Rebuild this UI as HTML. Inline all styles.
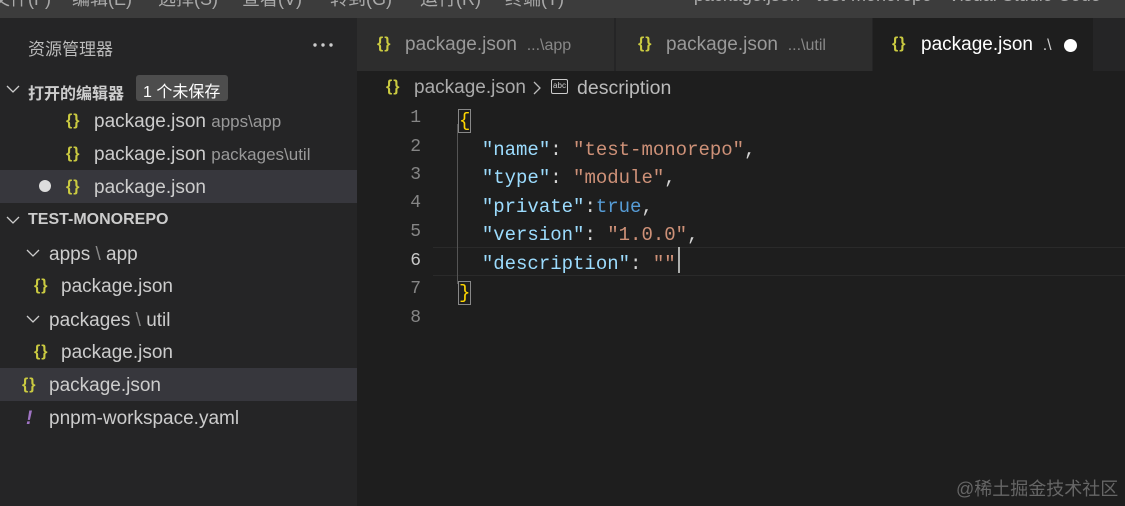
<!DOCTYPE html><html><head><meta charset="utf-8"><style>
*{margin:0;padding:0;box-sizing:border-box}
body{width:1125px;height:506px;overflow:hidden;background:#1e1e1e;font-family:"Liberation Sans","Noto Sans CJK SC",sans-serif;position:relative;color:#ccc}
.tb{position:absolute;left:0;top:0;width:1125px;height:18px;background:#3c3c3c;overflow:hidden}
.tb span{position:absolute;top:-15px;font-size:18px;color:#aaa}
.side{position:absolute;left:0;top:18px;width:357px;height:488px;background:#252526}
.a{position:absolute;white-space:nowrap;font-size:19px}
.br{color:#cbcb41;font-weight:bold;font-size:16px;letter-spacing:1px}
.row{position:absolute;left:0;width:357px;height:33px}
.tabs{position:absolute;left:357px;top:18px;width:768px;height:53px;background:#252526}
.tab{position:absolute;top:0;height:53px;background:#2d2d2d}
.ed{position:absolute;left:357px;top:71px;width:768px;height:435px;background:#1e1e1e}
.code{font-family:"Liberation Mono",monospace;font-size:19px;position:absolute;white-space:pre}
.k{color:#9cdcfe}.s{color:#ce9178}.b{color:#569cd6}
.ln{color:#858585;font-family:"Liberation Mono",monospace;font-size:18px;position:absolute;width:30px;text-align:right}
svg.ch{position:absolute;width:14px;height:14px}
</style></head><body>
<div class="tb">
<span style="left:-8px">文件(F)</span><span style="left:72px">编辑(E)</span><span style="left:158px">选择(S)</span><span style="left:242px">查看(V)</span><span style="left:330px">转到(G)</span><span style="left:420px">运行(R)</span><span style="left:505px">终端(T)</span>
<span style="left:678px">● package.json - test-monorepo - Visual Studio Code</span>
</div>
<div class="side">
<div class="a" style="left:28px;top:17px;font-size:17px;color:#bbb">资源管理器</div>
<svg style="position:absolute;left:312px;top:24px" width="22" height="6"><circle cx="3" cy="3" r="1.7" fill="#ccc"/><circle cx="11" cy="3" r="1.7" fill="#ccc"/><circle cx="19" cy="3" r="1.7" fill="#ccc"/></svg>
<svg class="ch" style="left:6px;top:64px" viewBox="0 0 14 14"><polyline points="1,4 7,10 13,4" fill="none" stroke="#ccc" stroke-width="1.3"/></svg>
<div class="a" style="left:28px;top:62px;font-size:16px;font-weight:bold;color:#ccc">打开的编辑器</div>
<div class="a" style="left:136px;top:57px;width:92px;height:26px;background:#4d4d4d;border-radius:3px;font-size:16px;color:#fff;padding:3px 0 0 7px">1 个未保存</div>
<div class="a br" style="left:66px;top:94px">{}</div><div class="a" style="left:94px;top:93px;color:#ccc">package.json <span style="font-size:17px;color:#999">apps\app</span></div>
<div class="a br" style="left:66px;top:127px">{}</div><div class="a" style="left:94px;top:126px;color:#ccc">package.json <span style="font-size:17px;color:#999">packages\util</span></div>
<div class="row" style="top:152px;background:#37373d"></div>
<div class="a" style="left:39px;top:162px;width:12px;height:12px;border-radius:6px;background:#ddd"></div>
<div class="a br" style="left:66px;top:160px">{}</div><div class="a" style="left:94px;top:159px;color:#ccc">package.json</div>
<svg class="ch" style="left:6px;top:195px" viewBox="0 0 14 14"><polyline points="1,4 7,10 13,4" fill="none" stroke="#ccc" stroke-width="1.3"/></svg>
<div class="a" style="left:28px;top:193px;font-size:16px;font-weight:bold;color:#ccc">TEST-MONOREPO</div>
<svg class="ch" style="left:26px;top:228px" viewBox="0 0 14 14"><polyline points="1,4 7,10 13,4" fill="none" stroke="#ccc" stroke-width="1.3"/></svg>
<div class="a" style="left:49px;top:226px">apps<span style="color:#888"> \ </span>app</div>
<div class="a br" style="left:34px;top:259px">{}</div><div class="a" style="left:61px;top:258px">package.json</div>
<svg class="ch" style="left:26px;top:294px" viewBox="0 0 14 14"><polyline points="1,4 7,10 13,4" fill="none" stroke="#ccc" stroke-width="1.3"/></svg>
<div class="a" style="left:49px;top:292px">packages<span style="color:#888"> \ </span>util</div>
<div class="a br" style="left:34px;top:325px">{}</div><div class="a" style="left:61px;top:324px">package.json</div>
<div class="row" style="top:350px;background:#37373d"></div>
<div class="a br" style="left:22px;top:358px">{}</div><div class="a" style="left:49px;top:357px">package.json</div>
<div class="a" style="left:26px;top:390px;color:#a074c4;font-weight:bold;font-style:italic">!</div><div class="a" style="left:49px;top:390px">pnpm-workspace.yaml</div>
</div>
<div class="tabs">
<div class="tab" style="left:0;width:258px;border-right:1px solid #252526"></div>
<div class="tab" style="left:259px;width:256px"></div>
<div class="tab" style="left:516px;width:220px;background:#1e1e1e"></div>
<div class="a br" style="left:20px;top:17px">{}</div><div class="a" style="left:48px;top:16px;color:#999">package.json <span style="font-size:16px;color:#888">&nbsp;...\app</span></div>
<div class="a br" style="left:281px;top:17px">{}</div><div class="a" style="left:309px;top:16px;color:#999">package.json <span style="font-size:16px;color:#888">&nbsp;...\util</span></div>
<div class="a br" style="left:535px;top:17px">{}</div><div class="a" style="left:564px;top:16px;color:#fff">package.json <span style="font-size:16px;color:#ccc">&nbsp;.\</span></div>
<div class="a" style="left:707px;top:21px;width:13px;height:13px;border-radius:7px;background:#fff"></div>
</div>
<div class="ed">
<div class="a br" style="left:29px;top:7px">{}</div>
<div class="a" style="left:57px;top:6px;color:#aaa">package.json</div>
<svg class="ch" style="left:173px;top:10px" viewBox="0 0 14 14"><polyline points="4,1 10,7 4,13" fill="none" stroke="#bbb" stroke-width="1.3"/></svg>
<div class="a" style="left:194px;top:8px;width:17px;height:15px;border:1.5px solid #ccc;border-radius:2px;font-size:8px;color:#ccc;text-align:center;line-height:11px">abc</div>
<div class="a" style="left:220px;top:6px;color:#bbb;font-size:19.5px">description</div>
<div style="position:absolute;left:76px;top:176px;width:692px;height:29px;border-top:1px solid #2a2a2a;border-bottom:1px solid #2a2a2a"></div>
<div style="position:absolute;left:100px;top:53px;width:1px;height:160px;background:#555"></div>
<div class="ln" style="left:34px;top:37px">1</div><div class="ln" style="left:34px;top:66px">2</div><div class="ln" style="left:34px;top:94px">3</div><div class="ln" style="left:34px;top:122px">4</div><div class="ln" style="left:34px;top:151px">5</div><div class="ln" style="left:34px;top:180px;color:#c6c6c6">6</div><div class="ln" style="left:34px;top:208px">7</div><div class="ln" style="left:34px;top:237px">8</div>
<div class="code" style="left:102px;top:36px;line-height:28.6px;color:#d4d4d4"><span style="color:#ffd700;outline:1px solid #888">{</span>
  <span class="k">"name"</span>: <span class="s">"test-monorepo"</span>,
  <span class="k">"type"</span>: <span class="s">"module"</span>,
  <span class="k">"private"</span>:<span class="b">true</span>,
  <span class="k">"version"</span>: <span class="s">"1.0.0"</span>,
  <span class="k">"description"</span>: <span class="s">""</span>
<span style="color:#ffd700;outline:1px solid #888">}</span></div>
<div style="position:absolute;left:321px;top:176px;width:2px;height:26px;background:#aeafad"></div>
<div class="a" style="left:599px;top:404px;font-size:18px;color:#666">@稀土掘金技术社区</div>
</div>
</body></html>
